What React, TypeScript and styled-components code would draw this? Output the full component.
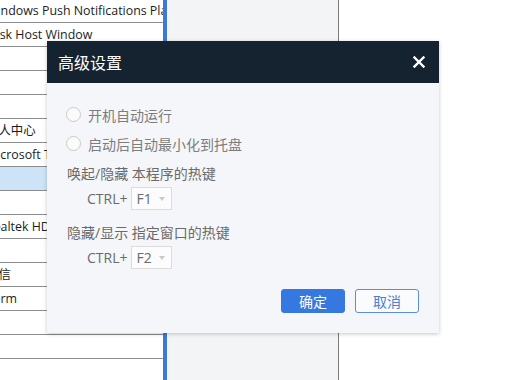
import React from "react";
import styled, { createGlobalStyle } from "styled-components";

const Global = createGlobalStyle`
  html, body { margin: 0; padding: 0; background: #ffffff; overflow: hidden; }
  body { font-family: "Open Sans", "Noto Sans CJK SC", sans-serif; }
`;

const Page = styled.div`
  position: relative;
  display: flex;
  width: 512px;
  height: 380px;
  overflow: hidden;
`;

const List = styled.div`
  width: 163px;
  flex-shrink: 0;
  margin-top: -1px;
  background: #ffffff;
  overflow: hidden;
`;

const Row = styled.div<{ $selected?: boolean }>`
  height: 23px;
  border-bottom: 1px solid #8c8c8c;
  background: ${(p) => (p.$selected ? "#cce3f8" : "#ffffff")};
  font-size: 12.4px;
  line-height: 23px;
  color: #1c1c1c;
  white-space: nowrap;
  overflow: hidden;
  text-indent: -14px;
`;

const BlueBar = styled.div`
  width: 4px;
  flex-shrink: 0;
  background: #3b7bd6;
`;

const SidePanel = styled.div`
  width: 171px;
  flex-shrink: 0;
  background: #f3f4f6;
  border-right: 1px solid #7a7a7a;
`;

const Rest = styled.div`
  flex: 1;
  background: #ffffff;
`;

const Dialog = styled.div`
  position: absolute;
  left: 47px;
  top: 41px;
  width: 392px;
  height: 292px;
  display: flex;
  flex-direction: column;
  background: #f4f6f9;
  box-shadow: 0 1px 4px rgba(0, 0, 0, 0.22);
`;

const Header = styled.div`
  height: 42px;
  flex-shrink: 0;
  display: flex;
  align-items: center;
  justify-content: space-between;
  padding: 0 14px 0 11px;
  background: #15222f;
`;

const Title = styled.div`
  color: #ffffff;
  font-size: 16px;
  font-family: "Noto Sans CJK SC", sans-serif;
`;

const Close = styled.svg`
  width: 12px;
  height: 12px;
  display: block;
`;

const Body = styled.div`
  flex: 1;
  display: flex;
  flex-direction: column;
  padding: 17px 20px 20px 19px;
`;

const RadioRow = styled.label`
  height: 29px;
  display: flex;
  align-items: center;
  gap: 7px;
  font-size: 14px;
  color: #7d7d7d;
`;

const RadioCircle = styled.span`
  width: 15px;
  height: 15px;
  box-sizing: border-box;
  border: 1px solid #cacaca;
  border-radius: 50%;
  background: #fbfbfc;
`;

const SectionLabel = styled.div<{ $gap: number }>`
  margin-top: ${(p) => p.$gap}px;
  padding-left: 1px;
  line-height: 20px;
  font-size: 14px;
  color: #6a6a6a;
`;

const HotkeyRow = styled.div`
  margin-top: 3px;
  height: 23px;
  display: flex;
  align-items: center;
  gap: 4px;
  padding-left: 21px;
  font-size: 14px;
  color: #6a6a6a;
`;

const SelectBox = styled.div`
  width: 41px;
  height: 23px;
  box-sizing: border-box;
  display: flex;
  align-items: center;
  justify-content: space-between;
  padding: 0 6px 0 4px;
  border: 1px solid #dcdcdc;
  background: #fcfcfd;
  font-size: 14px;
  color: #6a6a6a;
`;

const Arrow = styled.span`
  width: 0;
  height: 0;
  border-left: 3px solid transparent;
  border-right: 3px solid transparent;
  border-top: 4px solid #c9c9c9;
`;

const Footer = styled.div`
  margin-top: auto;
  display: flex;
  justify-content: flex-end;
  gap: 10px;
`;

const Button = styled.button<{ $primary?: boolean }>`
  width: 64px;
  height: 24px;
  box-sizing: border-box;
  border-radius: 3px;
  font-family: "Noto Sans CJK SC", sans-serif;
  font-size: 14px;
  padding: 0;
  border: 1px solid ${(p) => (p.$primary ? "#3478e0" : "#5a8edc")};
  background: ${(p) => (p.$primary ? "#3478e0" : "#fafbfd")};
  color: ${(p) => (p.$primary ? "#ffffff" : "#4a7fd4")};
`;

const rows: { text: string; selected?: boolean }[] = [
  { text: "Windows Push Notifications Platform" },
  { text: "Task Host Window" },
  { text: "" },
  { text: "" },
  { text: "" },
  { text: "个人中心" },
  { text: "Microsoft Text Input Application" },
  { text: "", selected: true },
  { text: "" },
  { text: "Realtek HD Audio Manager" },
  { text: "" },
  { text: "微信" },
  { text: "Perm" },
  { text: "" },
  { text: "" },
  { text: "" },
];

export default function App() {
  return (
    <>
      <Global />
      <Page>
        <List>
          {rows.map((r, i) => (
            <Row key={i} $selected={r.selected}>
              {r.text}
            </Row>
          ))}
        </List>
        <BlueBar />
        <SidePanel />
        <Rest />
        <Dialog>
          <Header>
            <Title>高级设置</Title>
            <Close viewBox="0 0 12 12">
              <path d="M1.5 1.5 L10.5 10.5 M10.5 1.5 L1.5 10.5" stroke="#ffffff" strokeWidth="2.4" strokeLinecap="square" />
            </Close>
          </Header>
          <Body>
            <RadioRow>
              <RadioCircle />
              开机自动运行
            </RadioRow>
            <RadioRow>
              <RadioCircle />
              启动后自动最小化到托盘
            </RadioRow>
            <SectionLabel $gap={6}>唤起/隐藏 本程序的热键</SectionLabel>
            <HotkeyRow>
              CTRL+
              <SelectBox>
                F1
                <Arrow />
              </SelectBox>
            </HotkeyRow>
            <SectionLabel $gap={13}>隐藏/显示 指定窗口的热键</SectionLabel>
            <HotkeyRow>
              CTRL+
              <SelectBox>
                F2
                <Arrow />
              </SelectBox>
            </HotkeyRow>
            <Footer>
              <Button $primary>确定</Button>
              <Button>取消</Button>
            </Footer>
          </Body>
        </Dialog>
      </Page>
    </>
  );
}
